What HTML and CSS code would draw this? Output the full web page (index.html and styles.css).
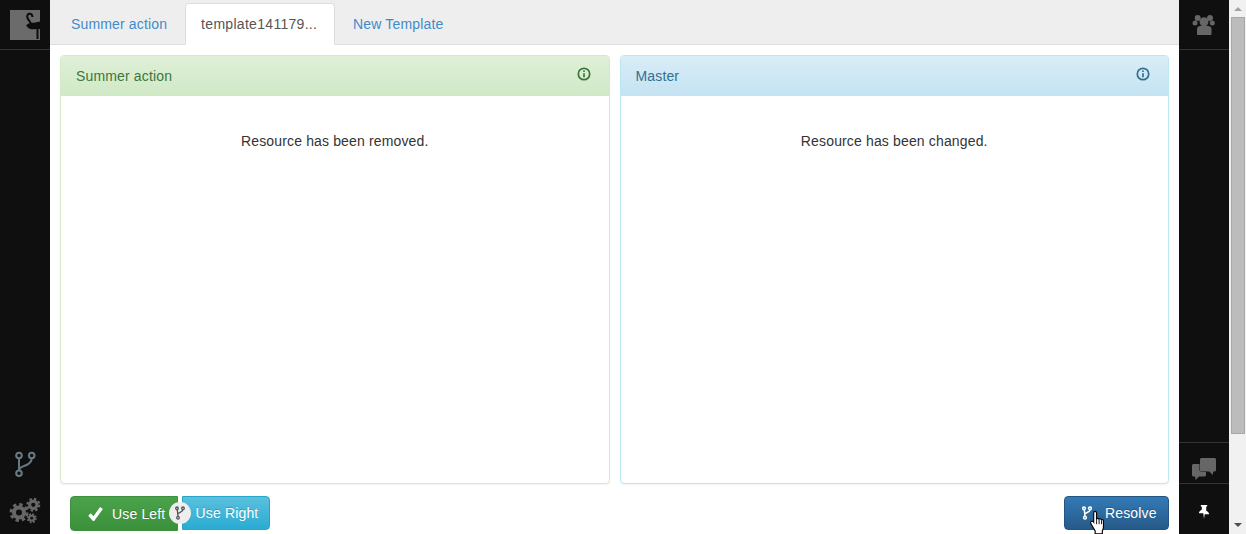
FILE: index.html
```html
<!DOCTYPE html>
<html lang="en">
<head>
<meta charset="utf-8">
<title>Merge</title>
<link rel="stylesheet" href="styles.css">
</head>
<body>
<div class="app">
  <aside class="rail">
    <div class="rail-cell logo-cell">
      <svg class="logo" viewBox="0 0 30 30" width="30" height="30">
        <rect class="logo-bg" width="30" height="30"/>
        <path class="logo-line" d="M22.500 7C22 3 17.500 2.800 17.200 6.500 17 10 21.500 11.500 21 15"/>
        <path class="logo-fill" d="M16.200 15.500C18 12.800 21 12.300 24 12.800L30 11.500V19H26C22 20 18 19 16.200 15.500z"/>
        <path class="logo-line" d="M27.500 19v10"/>
      </svg>
    </div>
    <div class="rail-spacer"></div>
    <div class="rail-bottom">
      <div class="rail-icon branch-slot">
        <svg viewBox="0 0 22 28" width="22" height="28" class="stroke-icon">
          <circle cx="5" cy="5.500" r="2.800"/><circle cx="17.700" cy="5.500" r="2.800"/><circle cx="5" cy="23.300" r="2.800"/>
          <path d="M5 8.300v12.200M17.700 8.300c0 5-4 6.500-7 7.500-3 1-5.700 2-5.700 4.700"/>
        </svg>
      </div>
      <div class="rail-icon gear-slot">
        <svg viewBox="0 0 32 28" width="32" height="28" class="gears">
          <circle class="cog-teeth cog-b" cx="24.300" cy="8.800" r="5.800"/><circle class="cog-body" cx="24.300" cy="8.800" r="5.200"/><circle class="cog-hole" cx="24.300" cy="8.800" r="2.100"/>
          <circle class="cog-teeth cog-c" cx="22.700" cy="22.200" r="4.200"/><circle class="cog-body" cx="22.700" cy="22.200" r="3.600"/><circle class="cog-hole" cx="22.700" cy="22.200" r="1.400"/>
          <circle class="cog-teeth cog-a" cx="10" cy="16.500" r="8"/><circle class="cog-body" cx="10" cy="16.500" r="7"/><circle class="cog-hole" cx="10" cy="16.500" r="3"/>
        </svg>
      </div>
    </div>
  </aside>

  <main class="main">
    <nav class="tabs">
      <a class="tab">Summer action</a>
      <a class="tab tab-active">template141179...</a>
      <a class="tab">New Template</a>
    </nav>
    <section class="panels">
      <article class="panel panel-green">
        <header class="panel-head">
          <span>Summer action</span>
          <svg class="info" viewBox="0 0 14 14" width="14" height="14"><circle cx="7" cy="7" r="5.700"/><path d="M7 6.200v4"/><path d="M7 3.400v1.600"/></svg>
        </header>
        <p class="panel-body">Resource has been removed.</p>
      </article>
      <article class="panel panel-blue">
        <header class="panel-head">
          <span>Master</span>
          <svg class="info" viewBox="0 0 14 14" width="14" height="14"><circle cx="7" cy="7" r="5.700"/><path d="M7 6.200v4"/><path d="M7 3.400v1.600"/></svg>
        </header>
        <p class="panel-body">Resource has been changed.</p>
      </article>
    </section>
    <footer class="actions">
      <div class="choice">
        <button class="btn btn-left">
          <svg viewBox="0 0 16 14" width="16" height="14" class="check"><path d="M1.500 7.500l4 4.500 8-11"/></svg>
          <span>Use Left</span>
        </button>
        <button class="btn btn-right">Use Right</button>
        <span class="choice-badge">
          <svg viewBox="0 0 10 14" width="10" height="14" class="mini-branch"><circle cx="2" cy="2.300" r="1.300"/><circle cx="8" cy="2.300" r="1.300"/><circle cx="3" cy="11.700" r="1.300"/><path d="M2.300 3.600l.7 6.800M8 3.600c0 3-5.300 2.500-5.300 5"/></svg>
        </span>
      </div>
      <div class="resolve-wrap">
        <button class="btn btn-resolve">
          <svg viewBox="0 0 10 14" width="10" height="14" class="mini-branch white"><circle cx="2" cy="2.300" r="1.400"/><circle cx="8" cy="2.300" r="1.400"/><circle cx="3" cy="11.700" r="1.400"/><path d="M2.300 3.700l.7 6.600M8 3.700c0 3-5.300 2.500-5.300 5"/></svg>
          <span>Resolve</span>
        </button>
        <svg class="cursor" viewBox="0 0 14 22" width="16" height="25">
          <path d="M3.500 1.500c1 -.8 2.200 0 2.200 1.200v5c.8-.6 1.800-.4 2.200.3.800-.5 1.800-.2 2.100.5.800-.3 1.800.2 1.800 1.200v5.300c0 1.500-.5 2.500-1 3.500v2.500H4.500v-2.500L1 12.500c-.8-1-.6-2 .2-2.500.7-.3 1.400 0 2 .8V2.700z"/>
          <path class="cursor-lines" d="M5.800 8v4.500M8 8.300v4.200M10.100 9v3.500"/>
        </svg>
      </div>
    </footer>
  </main>

  <aside class="rail">
    <div class="rail-cell">
      <svg viewBox="0 0 24 22" width="24" height="22" class="solid-icon">
        <circle cx="5.700" cy="4" r="3"/><circle cx="18" cy="4" r="3"/>
        <circle cx="3" cy="9" r="2.500"/><circle cx="20.300" cy="9" r="2.500"/>
        <circle cx="12" cy="7.700" r="4.500"/>
        <path d="M5 20v-5c0-2.500 2.500-3.500 7-3.500s7.500 1 7.500 3.500v5c0 .6-.4 1-1 1H6c-.6 0-1-.4-1-1z"/>
      </svg>
    </div>
    <div class="rail-spacer"></div>
    <div class="rail-cell chat-cell">
      <svg viewBox="0 0 24 22" width="24" height="22" class="chat-icon">
        <path class="chat-back" d="M1.500 6h11c.8 0 1.500.7 1.500 1.500V17c0 .8-.7 1.500-1.500 1.500H7l-3.500 3.500-.4-3.500H1.500C.7 18.500 0 17.800 0 17V7.500C0 6.700.7 6 1.500 6z"/>
        <path class="chat-front" d="M9.500 0h13c.8 0 1.500.7 1.500 1.500V12c0 .8-.7 1.500-1.500 1.500h-1.300l-.4 3.500-3.500-3.500H9.500C8.700 13.500 8 12.800 8 12V1.500C8 .7 8.700 0 9.500 0z"/>
      </svg>
    </div>
    <div class="rail-cell pin-cell">
      <svg viewBox="0 0 12 14" width="12" height="14" class="pin">
        <path d="M2.800 0h6.400v1.200l-1 .6v3.900c1.400.6 2.500 1.600 2.800 2.800v.7H6.700L6 14l-.7-5.800H1v-.7c.3-1.200 1.400-2.200 2.800-2.800V1.800l-1-.6z"/>
      </svg>
    </div>
  </aside>

  <div class="scrollbar">
    <span class="arrow arrow-up"></span>
    <div class="thumb"></div>
    <span class="arrow arrow-down"></span>
  </div>
</div>
</body>
</html>
```

FILE: styles.css
```css
* { box-sizing: border-box; }
html, body { margin: 0; height: 100%; overflow: hidden; }
body { font: 14px/20px "Liberation Sans", Arial, sans-serif; letter-spacing: .15px; color: #333; background: #fff; }

.app { display: flex; height: 534px; }

.rail { width: 50px; flex: none; display: flex; flex-direction: column; background: #0f0f0f; }
.rail-cell { height: 50px; flex: none; display: flex; align-items: center; justify-content: center; border-bottom: 1px solid #333; }
.rail-spacer { flex: 1; }
.logo { display: block; }
.logo-bg { fill: #6b6b6b; }
.logo-fill { fill: #0d0d0d; }
.logo-line { fill: none; stroke: #0d0d0d; stroke-width: 2; }
.rail-bottom { display: flex; flex-direction: column; }
.rail-icon { display: flex; align-items: center; justify-content: center; }
.branch-slot { height: 46px; }
.gear-slot { height: 47px; padding-bottom: 2px; }
.stroke-icon { fill: none; stroke: #687a80; stroke-width: 2; }
.gears .cog-teeth { fill: none; stroke: #666; }
.cog-a { stroke-width: 3; stroke-dasharray: 3.400 2.880; }
.cog-b { stroke-width: 2.400; stroke-dasharray: 2.400 2.150; }
.cog-c { stroke-width: 1.800; stroke-dasharray: 1.800 1.500; }
.cog-body { fill: #666; }
.cog-hole { fill: #0f0f0f; }
.solid-icon { fill: #666; }
.chat-icon { fill: #666; }
.chat-front { stroke: #0f0f0f; stroke-width: 1; paint-order: stroke; }
.chat-cell { height: 42px; padding-top: 12px; border-top: 1px solid #333; border-bottom: 1px solid #333; }
.pin-cell { border-bottom: 0; padding-top: 6px; }
.pin { fill: #fff; }

.main { flex: 1; min-width: 0; display: flex; flex-direction: column; }
.tabs { height: 45px; flex: none; display: flex; gap: 3px; align-items: flex-end; padding-left: 6px; background: #eee; border-bottom: 1px solid #ddd; }
.tab { height: 42px; margin-bottom: -1px; padding: 10px 14px; color: #428bca; white-space: nowrap; border: 1px solid transparent; border-radius: 4px 4px 0 0; }
.tab-active { width: 150px; padding-left: 15px; color: #555; background: #fff; border-color: #ddd #ddd #fff; letter-spacing: .3px; }

.panels { flex: none; height: 429px; margin-top: 10px; padding: 0 10px; display: flex; gap: 10px; }
.panel { flex: 1; min-width: 0; display: flex; flex-direction: column; border: 1px solid; border-radius: 4px; background: #fff; box-shadow: 0 1px 2px rgba(0,0,0,.05); }
.panel-head { height: 40px; flex: none; padding: 10px 18px 10px 15px; display: flex; justify-content: space-between; border-radius: 3px 3px 0 0; }
.panel-body { margin: 0; padding: 35px 15px 0; text-align: center; }
.panel-green { border-color: #d6e9c6; }
.panel-green .panel-head { color: #3c763d; background: linear-gradient(#dff0d8, #d0e9c6); }
.panel-blue { border-color: #bce8f1; }
.panel-blue .panel-head { color: #31708f; background: linear-gradient(#d9edf7, #c4e3f3); }
.info { fill: none; stroke: currentColor; stroke-width: 1.700; margin-top: 1px; }

.actions { flex: none; display: flex; justify-content: space-between; padding: 12px 10px 0 20px; }
.choice { position: relative; display: flex; gap: 4px; }
.btn { height: 34px; padding: 0; display: flex; align-items: center; justify-content: center; font: inherit; letter-spacing: inherit; white-space: nowrap; color: #fff; border: 1px solid; border-radius: 4px; text-shadow: 0 -1px 0 rgba(0,0,0,.2); }
.btn-left { width: 108px; height: 35px; padding-left: 17px; justify-content: flex-start; gap: 8px; border-radius: 4px 0 0 4px; border-color: #3e8f3e; background: linear-gradient(#4aa34a, #3c903c); }
.btn-right { width: 88px; padding-left: 2px; border-radius: 0 4px 4px 0; border-color: #28a4c9; background: linear-gradient(#5bc0de, #2aabd2); }
.check { fill: none; stroke: #fff; stroke-width: 3.400; }
.choice-badge { position: absolute; left: 99px; top: 6px; width: 22px; height: 22px; display: flex; align-items: center; justify-content: center; border-radius: 50%; background: #eee; }
.mini-branch { fill: none; stroke: #555; stroke-width: 1.300; }
.mini-branch.white { stroke: #fff; stroke-width: 1.500; }

.resolve-wrap { position: relative; }
.btn-resolve { width: 105px; padding-left: 17px; justify-content: flex-start; gap: 13px; border-color: #245580; background: linear-gradient(#337ab7, #265a88); }
.cursor { position: absolute; left: 26px; top: 14px; fill: #fff; stroke: #000; stroke-width: 1; }
.cursor-lines { fill: none; stroke-width: .8; }

.scrollbar { width: 17px; flex: none; display: flex; flex-direction: column; align-items: center; background: #f1f1f1; }
.arrow { width: 0; height: 0; flex: none; border-left: 4px solid transparent; border-right: 4px solid transparent; }
.arrow-up { margin-top: 7px; border-bottom: 4px solid #a3a3a3; }
.arrow-down { margin-top: 89px; border-top: 4px solid #505050; }
.thumb { width: 14px; height: 417px; margin-top: 6px; background: #bcbcbc; border: 1px solid #a8a8a8; }
```
